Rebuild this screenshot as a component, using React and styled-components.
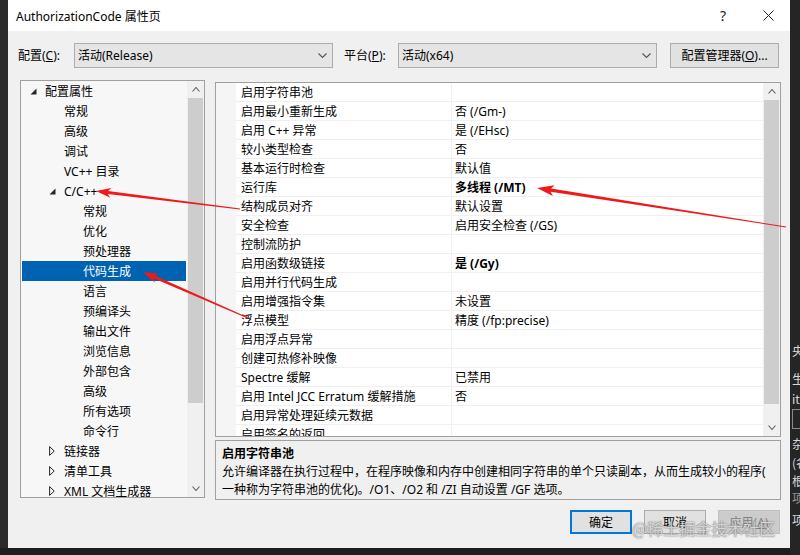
import React from "react";
import styled, { createGlobalStyle } from "styled-components";

const GlobalStyle = createGlobalStyle`
  html, body {
    margin: 0;
    padding: 0;
    background: #1e1e1e;
  }
  body {
    font-family: "Segoe UI", "Noto Sans", "Noto Sans CJK SC", sans-serif;
    font-size: 12px;
    color: #000;
  }
`;

const Screen = styled.div`
  position: relative;
  width: 800px;
  height: 555px;
  overflow: hidden;
  display: flex;
  background: #1e1e1e;
`;

const LeftEdge = styled.div`
  flex: none;
  width: 8px;
  height: 548px;
  background: #2b2b2b;
`;

const RightEdge = styled.div`
  flex: 1;
  height: 555px;
  overflow: hidden;
  background: #252526;
  color: #d8d8d8;
  padding: 342px 0 0 2px;
  font-family: "Noto Sans CJK SC", sans-serif;
  font-size: 12px;
`;

const EdgeGlyph = styled.div`
  height: ${(p) => p.$h}px;
  line-height: 18px;
  white-space: nowrap;
  color: ${(p) => (p.$dim ? "#9a9a9a" : "#d8d8d8")};
`;

const EdgeBox = styled.div`
  width: 12px;
  height: 18px;
  border: 1px solid #8a8a8a;
  margin: 2px 0 6px;
`;

const Dialog = styled.div`
  flex: none;
  width: 782px;
  height: 548px;
  background: #f0f0f0;
  display: flex;
  flex-direction: column;
`;

const TitleBar = styled.div`
  height: 31px;
  background: #fff;
  display: flex;
  align-items: center;
  padding-left: 8px;
`;

const TitleText = styled.span`
  flex: 1;
  font-size: 12px;
`;

const TitleButton = styled.div`
  width: ${(p) => p.$w}px;
  height: 31px;
  display: flex;
  align-items: center;
  justify-content: center;
  font-size: 14px;
  color: #222;
`;

const ConfigRow = styled.div`
  display: flex;
  align-items: center;
  height: 26px;
  margin-top: 11px;
  padding-left: 10px;
`;

const FieldLabel = styled.label`
  flex: none;
  width: ${(p) => p.$w}px;
  margin-left: ${(p) => p.$ml || 0}px;
  u {
    text-decoration: underline;
  }
`;

const Combo = styled.div`
  flex: none;
  box-sizing: border-box;
  width: 259px;
  height: 25px;
  border: 1px solid #adadad;
  background: #e5e5e5;
  display: flex;
  align-items: center;
  padding: 0 5px 0 3px;
`;

const ComboText = styled.span`
  flex: 1;
`;

const ConfigButton = styled.div`
  box-sizing: border-box;
  width: 109px;
  height: 25px;
  margin-left: 13px;
  border: 1px solid #adadad;
  background: #e1e1e1;
  display: flex;
  align-items: center;
  justify-content: center;
`;

const Main = styled.div`
  display: flex;
  align-items: flex-start;
  gap: 10px;
  height: 420px;
  margin-top: 12px;
  padding: 0 9px 0 12px;
`;

const Tree = styled.div`
  flex: none;
  box-sizing: border-box;
  width: 185px;
  height: 418px;
  border: 1px solid #a0a0a0;
  background: #f7f7f7;
  display: flex;
`;

const TreeList = styled.div`
  flex: 1;
  overflow: hidden;
`;

const TreeRow = styled.div`
  height: 20px;
  margin: 0 1px;
  display: flex;
  align-items: center;
  padding-left: ${(p) => 8 + p.$level * 19}px;
  white-space: nowrap;
  background: ${(p) => (p.$selected ? "#0063b1" : "transparent")};
  color: ${(p) => (p.$selected ? "#fff" : "#000")};
`;

const Twisty = styled.span`
  flex: none;
  width: 15px;
  height: 20px;
  display: flex;
  align-items: center;
`;

const Scrollbar = styled.div`
  flex: none;
  width: 17px;
  background: #f0f0f0;
  display: flex;
  flex-direction: column;
`;

const ScrollArrow = styled.div`
  height: 17px;
  display: flex;
  align-items: center;
  justify-content: center;
  flex: none;
`;

const ScrollTrack = styled.div`
  flex: 1;
`;

const ScrollThumb = styled.div`
  height: ${(p) => p.$h}px;
  margin: 0 1px;
  background: #cdcdcd;
`;

const RightColumn = styled.div`
  flex: 1;
  display: flex;
  flex-direction: column;
  gap: 3px;
  padding-top: 2px;
`;

const Grid = styled.div`
  box-sizing: border-box;
  height: 355px;
  border: 1px solid #a0a0a0;
  background: #fff;
  display: flex;
`;

const Gutter = styled.div`
  flex: none;
  width: 20px;
  background: #f5f5f5;
`;

const GridRows = styled.div`
  flex: 1;
  overflow: hidden;
`;

const PropRow = styled.div`
  box-sizing: border-box;
  height: 19px;
  display: flex;
  border-bottom: 1px solid #f0f0f0;
  white-space: nowrap;
`;

const NameCell = styled.div`
  flex: none;
  width: 215px;
  box-sizing: border-box;
  padding-left: 5px;
  display: flex;
  align-items: center;
  overflow: hidden;
`;

const ValueCell = styled.div`
  flex: 1;
  box-sizing: border-box;
  padding-left: 3px;
  border-left: 1px solid #f0f0f0;
  display: flex;
  align-items: center;
  font-weight: ${(p) => (p.$bold ? 700 : 400)};
`;

const Description = styled.div`
  box-sizing: border-box;
  height: 60px;
  border: 1px solid #a0a0a0;
  padding: 4px 6px;
  line-height: 18px;
`;

const DescTitle = styled.div`
  font-weight: 700;
`;

const ButtonRow = styled.div`
  display: flex;
  justify-content: flex-end;
  gap: 12px;
  margin-top: 10px;
  padding-right: 10px;
`;

const DialogButton = styled.div`
  box-sizing: border-box;
  width: 62px;
  height: 24px;
  display: flex;
  align-items: center;
  justify-content: center;
  background: ${(p) => (p.$disabled ? "#cccccc" : "#e1e1e1")};
  color: ${(p) => (p.$disabled ? "#838383" : "#000")};
  border: ${(p) =>
    p.$focused ? "2px solid #0078d7" : p.$disabled ? "1px solid #bfbfbf" : "1px solid #adadad"};
`;

const Overlay = styled.svg`
  position: absolute;
  left: 0;
  top: 0;
  pointer-events: none;
`;

const Watermark = styled.div`
  position: absolute;
  left: 632px;
  top: 516px;
  font-family: "Noto Sans CJK SC", sans-serif;
  font-size: 16px;
  color: rgba(255, 255, 255, 0.72);
  text-shadow: 0 0 1px rgba(90, 90, 90, 0.9), 0 0 2px rgba(90, 90, 90, 0.6);
  letter-spacing: 0px;
  white-space: nowrap;
`;

const Chevron = ({ up, w = 9, h = 5, color = "#555" }) => (
  <svg width={w} height={h} viewBox={`0 0 ${w} ${h}`}>
    <polyline
      points={up ? `0.5,${h - 0.5} ${w / 2},0.5 ${w - 0.5},${h - 0.5}` : `0.5,0.5 ${w / 2},${h - 0.5} ${w - 0.5},0.5`}
      fill="none"
      stroke={color}
      strokeWidth="1.1"
    />
  </svg>
);

const Expanded = () => (
  <svg width="7" height="7" viewBox="0 0 7 7">
    <polygon points="6.5,0.5 6.5,6.5 0.5,6.5" fill="#262626" />
  </svg>
);

const Collapsed = () => (
  <svg width="6" height="10" viewBox="0 0 6 10">
    <polygon points="0.6,0.6 5.2,5 0.6,9.4" fill="none" stroke="#262626" strokeWidth="1" />
  </svg>
);

const CloseIcon = () => (
  <svg width="11" height="11" viewBox="0 0 11 11">
    <path d="M0.5 0.5 L10.5 10.5 M10.5 0.5 L0.5 10.5" stroke="#222" strokeWidth="1" />
  </svg>
);

function arrowPoints([tx, ty], [ax, ay], headLen, headHalf, shaftHalf, tailHalf) {
  const dx = ax - tx;
  const dy = ay - ty;
  const len = Math.hypot(dx, dy);
  const ux = dx / len;
  const uy = dy / len;
  const nx = -uy;
  const ny = ux;
  const bx = tx + ux * headLen;
  const by = ty + uy * headLen;
  const nb = tx + ux * (headLen - 3);
  const nby = ty + uy * (headLen - 3);
  const pts = [
    [tx, ty],
    [bx + nx * headHalf, by + ny * headHalf],
    [nb + nx * shaftHalf, nby + ny * shaftHalf],
    [ax + nx * tailHalf, ay + ny * tailHalf],
    [ax - nx * tailHalf, ay - ny * tailHalf],
    [nb - nx * shaftHalf, nby - ny * shaftHalf],
    [bx - nx * headHalf, by - ny * headHalf],
  ];
  return pts.map((p) => p.map((v) => v.toFixed(1)).join(",")).join(" ");
}

const treeItems = [
  { label: "配置属性", level: 0, twisty: "open" },
  { label: "常规", level: 1 },
  { label: "高级", level: 1 },
  { label: "调试", level: 1 },
  { label: "VC++ 目录", level: 1 },
  { label: "C/C++", level: 1, twisty: "open" },
  { label: "常规", level: 2 },
  { label: "优化", level: 2 },
  { label: "预处理器", level: 2 },
  { label: "代码生成", level: 2, selected: true },
  { label: "语言", level: 2 },
  { label: "预编译头", level: 2 },
  { label: "输出文件", level: 2 },
  { label: "浏览信息", level: 2 },
  { label: "外部包含", level: 2 },
  { label: "高级", level: 2 },
  { label: "所有选项", level: 2 },
  { label: "命令行", level: 2 },
  { label: "链接器", level: 1, twisty: "closed" },
  { label: "清单工具", level: 1, twisty: "closed" },
  { label: "XML 文档生成器", level: 1, twisty: "closed" },
];

const props = [
  ["启用字符串池", ""],
  ["启用最小重新生成", "否 (/Gm-)"],
  ["启用 C++ 异常", "是 (/EHsc)"],
  ["较小类型检查", "否"],
  ["基本运行时检查", "默认值"],
  ["运行库", "多线程 (/MT)", true],
  ["结构成员对齐", "默认设置"],
  ["安全检查", "启用安全检查 (/GS)"],
  ["控制流防护", ""],
  ["启用函数级链接", "是 (/Gy)", true],
  ["启用并行代码生成", ""],
  ["启用增强指令集", "未设置"],
  ["浮点模型", "精度 (/fp:precise)"],
  ["启用浮点异常", ""],
  ["创建可热修补映像", ""],
  ["Spectre 缓解", "已禁用"],
  ["启用 Intel JCC Erratum 缓解措施", "否"],
  ["启用异常处理延续元数据", ""],
  ["启用签名的返回", ""],
];

const edgeGlyphs = [
  { t: "央", h: 28 },
  { t: "生", h: 20 },
  { t: "it", h: 17 },
  { box: true },
  { t: "杂", h: 19 },
  { t: "(名", h: 18 },
  { t: "根", h: 17 },
  { t: "项", h: 22, dim: true },
  { t: "项", h: 20 },
];

const arrows = [
  { tip: [537, 188], tail: [786, 227], head: 17, half: 5.5, shaft: 1.7 },
  { tip: [96, 191], tail: [240, 209], head: 15, half: 5, shaft: 1.5 },
  { tip: [143, 272], tail: [248, 318], head: 15, half: 5, shaft: 1.5 },
];

export default function App() {
  return (
    <>
      <GlobalStyle />
      <Screen>
        <LeftEdge />
        <Dialog>
          <TitleBar>
            <TitleText>AuthorizationCode 属性页</TitleText>
            <TitleButton $w={46}>?</TitleButton>
            <TitleButton $w={44}>
              <CloseIcon />
            </TitleButton>
          </TitleBar>

          <ConfigRow>
            <FieldLabel $w={56}>
              配置(<u>C</u>):
            </FieldLabel>
            <Combo>
              <ComboText>活动(Release)</ComboText>
              <Chevron />
            </Combo>
            <FieldLabel $w={54} $ml={11}>
              平台(<u>P</u>):
            </FieldLabel>
            <Combo>
              <ComboText>活动(x64)</ComboText>
              <Chevron />
            </Combo>
            <ConfigButton>
              配置管理器(<u>O</u>)...
            </ConfigButton>
          </ConfigRow>

          <Main>
            <Tree>
              <TreeList>
                {treeItems.map((item, i) => (
                  <TreeRow key={i} $level={item.level} $selected={item.selected}>
                    <Twisty>
                      {item.twisty === "open" && <Expanded />}
                      {item.twisty === "closed" && <Collapsed />}
                    </Twisty>
                    {item.label}
                  </TreeRow>
                ))}
              </TreeList>
              <Scrollbar>
                <ScrollArrow>
                  <Chevron up w={8} h={5} color="#606060" />
                </ScrollArrow>
                <ScrollTrack>
                  <ScrollThumb $h={305} />
                </ScrollTrack>
                <ScrollArrow>
                  <Chevron w={8} h={5} color="#606060" />
                </ScrollArrow>
              </Scrollbar>
            </Tree>

            <RightColumn>
              <Grid>
                <Gutter />
                <GridRows>
                  {props.map(([name, value, bold], i) => (
                    <PropRow key={i}>
                      <NameCell>{name}</NameCell>
                      <ValueCell $bold={bold}>{value}</ValueCell>
                    </PropRow>
                  ))}
                </GridRows>
                <Scrollbar>
                  <ScrollArrow>
                    <Chevron up w={8} h={5} color="#606060" />
                  </ScrollArrow>
                  <ScrollTrack>
                    <ScrollThumb $h={304} />
                  </ScrollTrack>
                  <ScrollArrow>
                    <Chevron w={8} h={5} color="#606060" />
                  </ScrollArrow>
                </Scrollbar>
              </Grid>
              <Description>
                <DescTitle>启用字符串池</DescTitle>
                允许编译器在执行过程中，在程序映像和内存中创建相同字符串的单个只读副本，从而生成较小的程序(
                <br />
                一种称为字符串池的优化)。/O1、/O2 和 /ZI 自动设置 /GF 选项。
              </Description>
            </RightColumn>
          </Main>

          <ButtonRow>
            <DialogButton $focused>确定</DialogButton>
            <DialogButton>取消</DialogButton>
            <DialogButton $disabled>
              应用(<u>A</u>)
            </DialogButton>
          </ButtonRow>
        </Dialog>
        <RightEdge>
          {edgeGlyphs.map((g, i) =>
            g.box ? (
              <EdgeBox key={i} />
            ) : (
              <EdgeGlyph key={i} $h={g.h} $dim={g.dim}>
                {g.t}
              </EdgeGlyph>
            )
          )}
        </RightEdge>

        <Watermark>@稀土掘金技术社区</Watermark>
        <Overlay width="800" height="555" viewBox="0 0 800 555">
          {arrows.map((a, i) => (
            <polygon
              key={i}
              points={arrowPoints(a.tip, a.tail, a.head, a.half, a.shaft, 0.4)}
              fill="#ee1a1a"
            />
          ))}
        </Overlay>
      </Screen>
    </>
  );
}
